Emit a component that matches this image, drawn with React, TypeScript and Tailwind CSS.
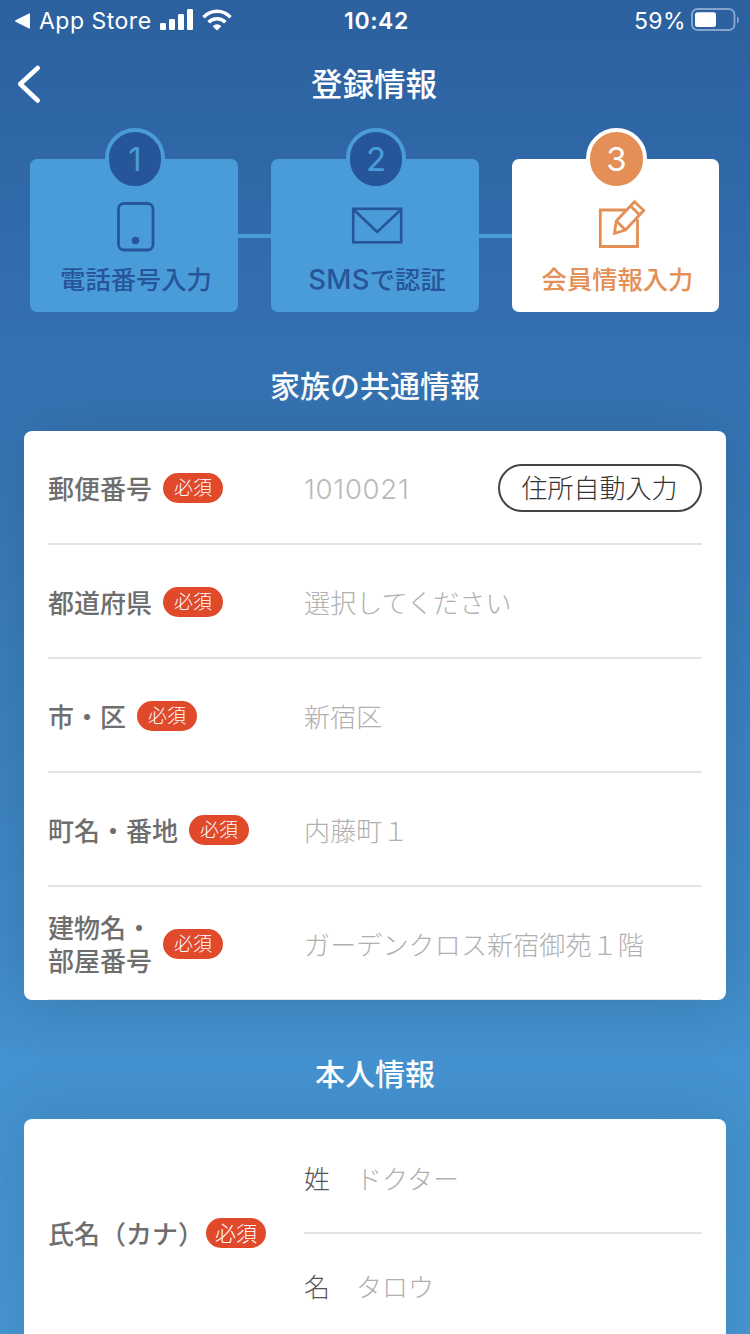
import type { ReactNode } from "react";

function StatusBar() {
  return (
    <div className="flex h-10 shrink-0 items-center pt-px pl-[14px] pr-[11px] font-[Inter,'Noto_Sans_CJK_JP',sans-serif] text-white">
      <div className="flex flex-1 items-center">
        <svg width="17" height="16" viewBox="0 0 17 16" fill="currentColor">
          <path d="M1.6 7.2 15 .6q1-.4 1 .6v13.6q0 1-1 .6L1.6 8.8q-1.400-.8 0-1.600z" />
        </svg>
        <span className="ml-[8px] w-[113px] whitespace-nowrap text-[23px] leading-[40px] tracking-[0.5px]">App Store</span>
        <svg className="mb-[2px] ml-[8px]" width="34" height="22" viewBox="0 0 34 22" fill="currentColor">
          <rect x="0" y="14" width="6" height="7" rx="1.2" />
          <rect x="9" y="10" width="6" height="11" rx="1.2" />
          <rect x="18" y="5" width="6" height="16" rx="1.2" />
          <rect x="27" y="0" width="6" height="21" rx="1.2" />
        </svg>
        <svg className="mb-px ml-[8px]" width="30" height="22" viewBox="0 0 30 22" fill="none" stroke="currentColor" strokeWidth="3.6">
          <path d="M1.500 8.300Q7.200 2.300 15 2.300T28.500 8.300" />
          <path d="M6.600 13.200Q10.100 9.700 15 9.700T23.400 13.200" />
          <path d="M15 21.600 10.600 17.200Q15 13.400 19.400 17.200z" fill="currentColor" stroke="none" />
        </svg>
      </div>
      <span className="text-[23px] leading-[40px] font-semibold tracking-[0.6px]">10:42</span>
      <div className="flex flex-1 items-center justify-end">
        <span className="text-[23px] leading-[40px] tracking-[0.4px]">59%</span>
        <svg className="mb-px ml-[5px]" width="48" height="24" viewBox="0 0 48 24">
          <rect x="1" y="1" width="42.500" height="21" rx="5.500" fill="none" stroke="#83a4cb" strokeWidth="2" />
          <rect x="4" y="4.300" width="21" height="14.700" rx="2.500" fill="#fff" />
          <path d="M46 8.500q2 .5 2 3.500t-2 3.500z" fill="#83a4cb" />
        </svg>
      </div>
    </div>
  );
}

function PhoneIcon() {
  return (
    <svg className="ml-[3px]" width="38" height="50" viewBox="0 0 38 50">
      <rect x="1.500" y="1.500" width="34.500" height="46.500" rx="5.500" fill="none" stroke="currentColor" strokeWidth="2.800" />
      <circle cx="18.500" cy="38.500" r="3.800" fill="currentColor" />
    </svg>
  );
}

function MailIcon() {
  return (
    <svg className="ml-[4px]" width="52" height="50" viewBox="0 0 52 50" fill="none" stroke="currentColor" strokeWidth="2.600">
      <rect x="2.200" y="6.800" width="48" height="33.500" />
      <path d="M3 8 26.200 30 49.500 8" />
    </svg>
  );
}

function EditIcon() {
  return (
    <svg className="ml-[10px] overflow-visible" width="50" height="50" viewBox="0 0 50 50" fill="none" stroke="currentColor" strokeWidth="2.800">
      <path d="M31.500 8H4.300V44.500H41.500V17.500" />
      <path d="M18.500 31.300 20.300 19 38.500 -0.200 47.700 8.500 29.500 28z" />
      <path d="M20.300 19 29.500 28M34.500 4 43.500 12.700" />
    </svg>
  );
}

function Step({ number, label, icon, active = false }: { number: number; label: ReactNode; icon: ReactNode; active?: boolean }) {
  return (
    <div
      className={
        active
          ? "relative flex h-[153px] w-[207px] flex-col items-center rounded-[7px] bg-white text-[#e48f56]"
          : "relative flex h-[153px] w-[208px] flex-col items-center rounded-[7px] bg-[#4a9cd9] text-[#27559a]"
      }
    >
      <div
        className={
          active
            ? "absolute top-[-31px] left-[74px] flex h-[62px] w-[61px] items-center justify-center rounded-full border-4 border-white bg-[#e48f56] text-white"
            : "absolute top-[-31px] left-[75px] flex h-[62px] w-[60px] items-center justify-center rounded-full border-4 border-[#4a9cd9] bg-[#27559a] text-[#4a9cd9]"
        }
      >
        <span className="font-[Inter,sans-serif] text-[33px] leading-none font-normal">{number}</span>
      </div>
      <div className="mt-[43px] h-[50px]">{icon}</div>
      <div className="mt-[7px] h-[38px] pl-[4px] text-[25.300px] leading-[38px] font-medium whitespace-nowrap">{label}</div>
    </div>
  );
}

function Connector() {
  return <div className="mt-[75px] h-[4px] w-[33px] bg-[#4a9cd9]" />;
}

function Required({ large = false }: { large?: boolean }) {
  return (
    <span
      className={
        large
          ? "flex h-[30px] w-[60px] shrink-0 items-center justify-center rounded-full bg-[#e04a2b] text-[21px] leading-[28px] font-light text-white"
          : "flex h-[30px] w-[60px] shrink-0 items-center justify-center rounded-full bg-[#e04a2b] text-[19px] leading-[28px] font-light text-white"
      }
    >
      <span className="pb-[2px]">必須</span>
    </span>
  );
}

function Field({ label, placeholder, action }: { label: ReactNode; placeholder: ReactNode; action?: string }) {
  return (
    <div className="flex h-[114px] items-center border-b-2 border-[#e3e3e3] pt-[2px]">
      <div className="flex w-[256px] items-center gap-[11px]">
        <span className="pb-[2px] text-[26px] leading-[33px] font-medium text-[#6e6e6e]">{label}</span>
        <Required />
      </div>
      <span className="flex-1 text-[26px] leading-[36px] font-light tracking-[0.150px] whitespace-nowrap text-[#b0b0b0]">
        {placeholder}
      </span>
      {action && (
        <button className="h-[48px] w-[204px] rounded-full border-2 border-[#444] pr-px pb-[2px] text-[26px] leading-[42px] font-light text-[#333]">
          {action}
        </button>
      )}
    </div>
  );
}

function SectionTitle({ children }: { children: ReactNode }) {
  return <h2 className="text-center text-[30px] leading-[40px] font-medium text-white">{children}</h2>;
}

export default function App() {
  return (
    <div
      lang="ja"
      className="flex h-[1334px] w-[750px] flex-col overflow-hidden bg-[linear-gradient(180deg,#2c609f_0%,#3573b3_30%,#4492cf_80%,#4797d4_100%)] font-['Noto_Sans_CJK_JP',sans-serif]"
    >
      <StatusBar />
      <header className="flex h-[88px] shrink-0 items-center px-4">
        <svg width="26" height="40" viewBox="0 0 26 40" fill="none" stroke="#fff" strokeWidth="4.600" strokeLinecap="round" strokeLinejoin="round">
          <path d="M21.700 4 4.200 20 21.700 36.500" />
        </svg>
        <h1 className="flex-1 pr-[28px] pb-[4px] text-center text-[31.500px] leading-[44px] font-medium text-white">登録情報</h1>
      </header>
      <div className="flex shrink-0 px-[30px] pt-[31px]">
        <Step number={1} label="電話番号入力" icon={<PhoneIcon />} />
        <Connector />
        <Step
          number={2}
          label={<><span className="font-[Inter,sans-serif] text-[27.500px] tracking-[0.300px]">SMS</span>で認証</>}
          icon={<MailIcon />}
        />
        <Connector />
        <Step number={3} label="会員情報入力" icon={<EditIcon />} active />
      </div>
      <div className="mt-[52px] shrink-0">
        <SectionTitle>家族の共通情報</SectionTitle>
      </div>
      <section className="mx-6 mt-[27px] h-[569px] shrink-0 overflow-hidden rounded-[8px] bg-white px-6 shadow-[0_0_60px_rgba(30,70,100,0.3)]">
        <Field
          label="郵便番号"
          placeholder={<span className="font-[Inter,sans-serif] text-[27.500px] tracking-[0.750px] text-[#b9b9b9]">1010021</span>}
          action="住所自動入力"
        />
        <Field label="都道府県" placeholder="選択してください" />
        <Field label="市・区" placeholder="新宿区" />
        <Field label="町名・番地" placeholder="内藤町１" />
        <Field label={<>建物名・<br />部屋番号</>} placeholder="ガーデンクロス新宿御苑１階" />
      </section>
      <div className="mt-[52px] shrink-0">
        <SectionTitle>本人情報</SectionTitle>
      </div>
      <section className="mx-6 mt-[27px] flex h-[300px] shrink-0 items-start rounded-t-[8px] bg-white px-6 pt-[7px] shadow-[0_0_60px_rgba(30,70,100,0.22)]">
        <div className="flex h-[214px] w-[256px] shrink-0 items-center">
          <span className="w-[158px] pb-[2px] text-[26px] leading-[33px] font-medium whitespace-nowrap text-[#6e6e6e]">氏名（カナ）</span>
          <Required large />
        </div>
        <div className="flex-1 text-[26px] leading-[36px] font-light">
          <div className="flex h-[108px] items-center border-b-2 border-[#e3e3e3] pb-[2px]">
            <span className="w-[52px] text-[#555]">姓</span>
            <span className="text-[#b0b0b0]">ドクター</span>
          </div>
          <div className="flex h-[108px] items-center border-b-2 border-[#e3e3e3] pb-[2px]">
            <span className="w-[52px] text-[#555]">名</span>
            <span className="text-[#b0b0b0]">タロウ</span>
          </div>
        </div>
      </section>
    </div>
  );
}
